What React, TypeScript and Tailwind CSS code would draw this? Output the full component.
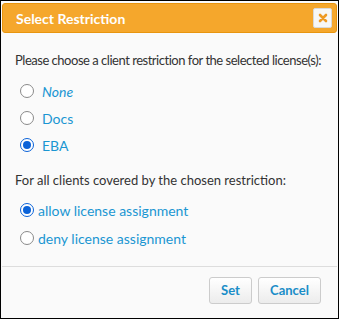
import { useState } from 'react';

function Radio({ checked, onClick }: { checked: boolean; onClick: () => void }) {
  return (
    <span
      onClick={onClick}
      className={`flex items-center justify-center w-[14px] h-[14px] rounded-full border bg-white ${
        checked ? 'border-[#0a62d8]' : 'border-[#8a8a8a]'
      }`}
    >
      {checked && <span className="block w-[8px] h-[8px] rounded-full bg-[#0a62d8]" />}
    </span>
  );
}

export default function App() {
  const [restriction, setRestriction] = useState('EBA');
  const [assignment, setAssignment] = useState('allow');

  const restrictions = [
    { value: 'None', italic: true },
    { value: 'Docs', italic: false },
    { value: 'EBA', italic: false },
  ];

  return (
    <div
      className="w-[339px] h-[319px] border border-black bg-[#fafafa] flex flex-col text-[13px] text-[#333]"
      style={{ fontFamily: 'Lato, "Noto Sans", sans-serif' }}
    >
      {/* Header */}
      <div className="mt-[2px] mx-[1px] h-[30px] rounded-[3px] bg-[#f5a72c] border border-[#e8950f] flex items-center justify-between pl-[13px] pr-[4px]">
        <span className="text-white font-bold text-[14px]">Select Restriction</span>
        <button className="w-[19px] h-[20px] rounded-[2px] bg-[#f7f7f7] border border-[#d9d9d9] flex items-center justify-center">
          <svg width="10" height="10" viewBox="0 0 10 10">
            <path d="M2 2 L8 8 M8 2 L2 8" stroke="#ee9a25" strokeWidth="2.6" strokeLinecap="round" />
          </svg>
        </button>
      </div>

      {/* Body */}
      <div className="flex-1 flex flex-col px-[14px] pt-[18px]">
        <p className="leading-[18px] whitespace-nowrap tracking-[-0.48px]">
          Please choose a client restriction for the selected license(s):
        </p>
        <div className="flex flex-col gap-[9px] mt-[13px] pl-[5px]">
          {restrictions.map((r) => (
            <label key={r.value} className="flex items-center gap-[8px] h-[18px] cursor-pointer">
              <Radio checked={restriction === r.value} onClick={() => setRestriction(r.value)} />
              <span className={`text-[#1a96d2] text-[14px] ${r.italic ? 'italic' : ''}`}>{r.value}</span>
            </label>
          ))}
        </div>

        <p className="leading-[18px] mt-[17px] whitespace-nowrap">For all clients covered by the chosen restriction:</p>
        <div className="flex flex-col gap-[10px] mt-[12px] pl-[5px]">
          {['allow', 'deny'].map((a) => (
            <label key={a} className="flex items-center gap-[4px] h-[18px] cursor-pointer">
              <Radio checked={assignment === a} onClick={() => setAssignment(a)} />
              <span className="text-[#1a96d2] text-[14px]">{a} license assignment</span>
            </label>
          ))}
        </div>
      </div>

      {/* Footer */}
      <div className="mx-[1px] border-t border-[#dddddd] h-[52px] flex items-start justify-end gap-[6px] pt-[10px] pr-[16px]">
        <button className="h-[27px] w-[43px] rounded-[3px] border border-[#cccccc] bg-gradient-to-b from-white to-[#ececec] text-[#1a8dc8] font-bold text-[13px]">
          Set
        </button>
        <button className="h-[27px] w-[63px] rounded-[3px] border border-[#cccccc] bg-gradient-to-b from-white to-[#ececec] text-[#1a8dc8] font-bold text-[13px]">
          Cancel
        </button>
      </div>
    </div>
  );
}
